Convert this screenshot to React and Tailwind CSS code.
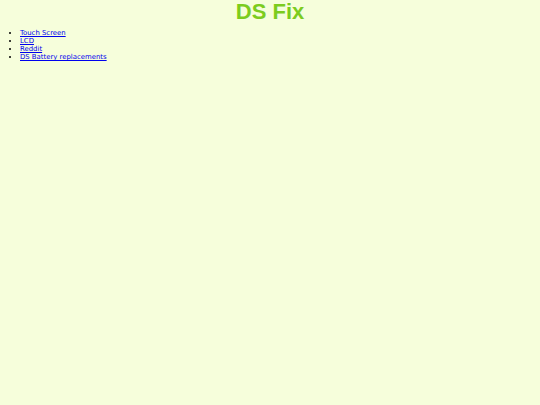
export default function App() {
  return (
    <div className="min-h-[405px] bg-[#f6fedb] font-['DejaVu_Sans',sans-serif] text-black">
      <h1 className="m-0 text-center font-['Liberation_Sans',sans-serif] text-[22px] font-bold leading-[24px] text-[#7ccc1e]">DS Fix</h1>
      <ul className="m-0 mt-[5px] list-disc pl-5 text-[6.9px] leading-[8px]">
        <li><a href="#" className="text-[#0000ee] underline">Touch Screen</a></li>
        <li><a href="#" className="text-[#0000ee] underline">LCD</a></li>
        <li><a href="#" className="text-[#0000ee] underline">Reddit</a></li>
        <li><a href="#" className="text-[#0000ee] underline">DS Battery replacements</a></li>
      </ul>
    </div>
  );
}
